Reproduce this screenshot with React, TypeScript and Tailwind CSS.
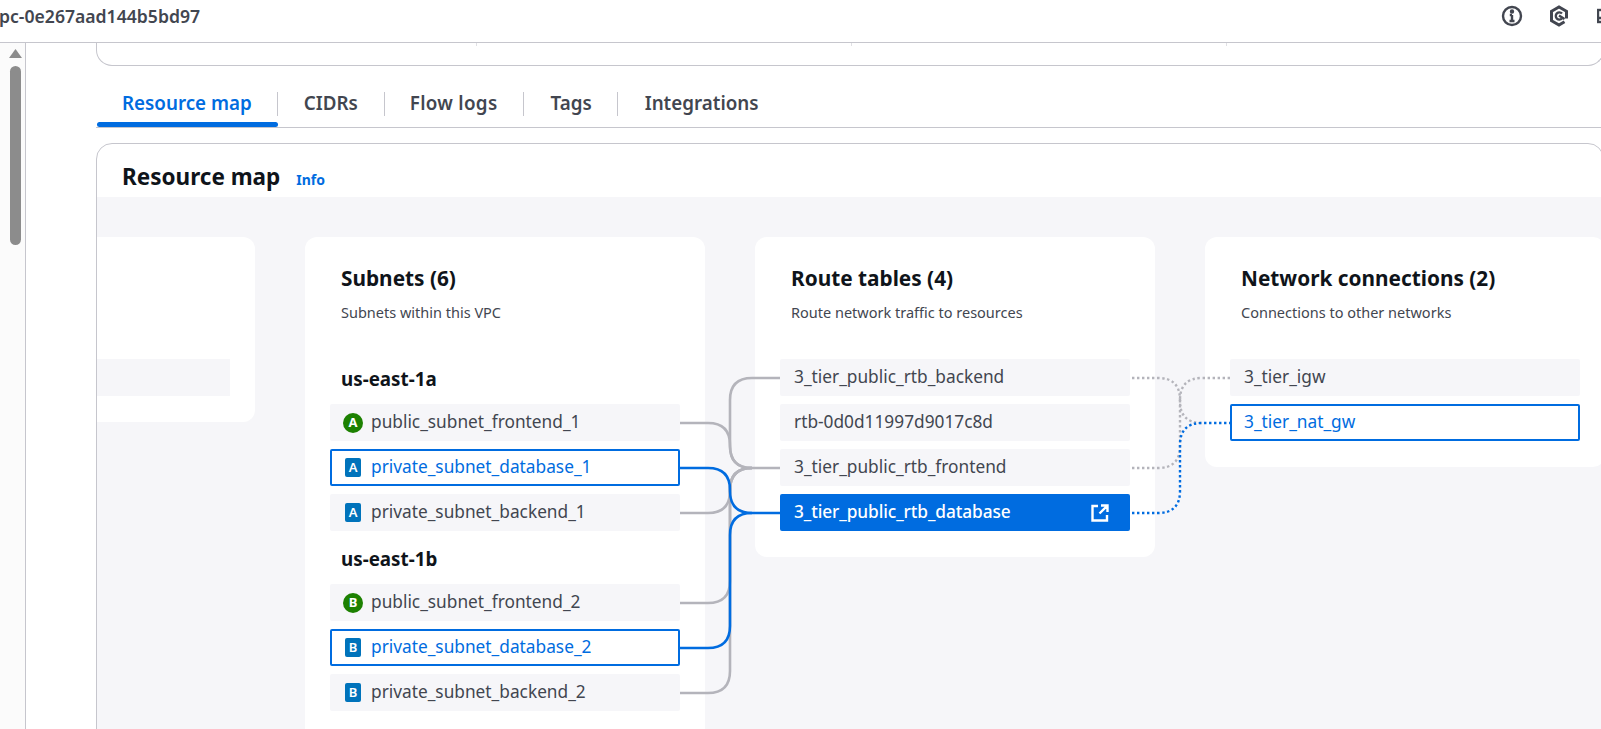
import React from 'react';

const font = 'font-["Noto_Sans",sans-serif]';

type Row = { name: string; badge?: string; kind?: 'public' | 'private'; state?: 'linked' | 'active' };

const zoneA: Row[] = [
  { name: 'public_subnet_frontend_1', badge: 'A', kind: 'public' },
  { name: 'private_subnet_database_1', badge: 'A', kind: 'private', state: 'linked' },
  { name: 'private_subnet_backend_1', badge: 'A', kind: 'private' },
];

const zoneB: Row[] = [
  { name: 'public_subnet_frontend_2', badge: 'B', kind: 'public' },
  { name: 'private_subnet_database_2', badge: 'B', kind: 'private', state: 'linked' },
  { name: 'private_subnet_backend_2', badge: 'B', kind: 'private' },
];

const routeTables: Row[] = [
  { name: '3_tier_public_rtb_backend' },
  { name: 'rtb-0d0d11997d9017c8d' },
  { name: '3_tier_public_rtb_frontend' },
  { name: '3_tier_public_rtb_database', state: 'active' },
];

const connections: Row[] = [{ name: '3_tier_igw' }, { name: '3_tier_nat_gw', state: 'linked' }];

const tabs = [
  { label: 'Resource map', cls: 'px-[25px] text-[#006ce0] border-r' },
  { label: 'CIDRs', cls: 'px-[26px] text-[#424650] border-r' },
  { label: 'Flow logs', cls: 'px-[25px] tracking-[0.3px] text-[#424650] border-r' },
  { label: 'Tags', cls: 'pl-[27px] pr-[25px] text-[#424650] border-r' },
  { label: 'Integrations', cls: 'pl-[27px] pr-[25px] text-[#424650]' },
];

function Badge({ label, kind }: { label: string; kind: 'public' | 'private' }) {
  if (kind === 'public') {
    return (
      <span className="flex h-[20px] w-[20px] shrink-0 items-center justify-center rounded-full bg-[#1d8102] text-[13px] font-bold leading-none text-white">
        {label}
      </span>
    );
  }
  return (
    <span className="mx-[2px] flex h-[19px] w-[16px] shrink-0 items-center justify-center rounded-[2px] bg-[#0073bb] text-[13px] font-semibold leading-none text-white">
      {label}
    </span>
  );
}

function MapRow({ row }: { row: Row }) {
  const tone =
    row.state === 'active'
      ? 'bg-[#006ce0] text-white font-medium tracking-[-0.1px]'
      : row.state === 'linked'
        ? 'bg-white border-2 border-[#006ce0] text-[#006ce0]'
        : 'bg-[#f6f6f9] text-[#424650]';
  return (
    <div className={`flex h-[37px] items-center rounded-[2px] text-[17.3px] leading-none ${tone} ${row.badge ? (row.state ? 'pl-[11px]' : 'pl-[13px]') : row.state === 'linked' ? 'pl-[12px]' : 'pl-[14px]'}`}>
      {row.badge && row.kind && (
        <span className="mr-[8px]">
          <Badge label={row.badge} kind={row.kind} />
        </span>
      )}
      <span className="-mt-[2px]">{row.name}</span>
      {row.state === 'active' && (
        <svg className="ml-auto mr-[21px]" width="18" height="18" viewBox="0 0 18 18" fill="none" stroke="currentColor" strokeWidth="2.4">
          <path d="M7 2H1.5v14.5H16V11" />
          <path d="M10 1.5h6.5V8M16 2L8.5 9.5" />
        </svg>
      )}
    </div>
  );
}

function PanelHead({ title, sub }: { title: string; sub: string }) {
  return (
    <>
      <h3 className="pl-[36px] text-[20.8px] font-bold leading-[28px] text-[#0f141a]">{title}</h3>
      <p className="mt-[10px] pl-[36px] text-[14.5px] leading-[20px] text-[#424650]">{sub}</p>
    </>
  );
}

function Connectors() {
  const gray = [
    'M680 423H708Q730 423 730 445V446Q730 468 752 468H780',
    'M780 378H752Q730 378 730 400V446Q730 468 752 468',
    'M680 513H708Q730 513 730 491V490Q730 468 752 468',
    'M680 603H708Q730 603 730 581V490Q730 468 752 468',
    'M680 693H708Q730 693 730 671V490Q730 468 752 468',
  ];
  const blue = ['M680 468H708Q730 468 730 490V491Q730 513 752 513H780', 'M680 648H708Q730 648 730 626V535Q730 513 752 513'];
  const dottedGray = [
    'M1132 378H1158Q1180 378 1180 400V401Q1180 423 1202 423',
    'M1230 378H1202Q1180 378 1180 400',
    'M1132 468H1158Q1180 468 1180 446V400',
  ];
  return (
    <svg className="pointer-events-none absolute left-0 top-0" width="1504" height="532" viewBox="97 197 1504 532" fill="none">
      {gray.map((d) => (
        <path key={d} d={d} stroke="#b4b4bb" strokeWidth="2.6" />
      ))}
      {blue.map((d) => (
        <path key={d} d={d} stroke="#006ce0" strokeWidth="2.6" />
      ))}
      {dottedGray.map((d) => (
        <path key={d} d={d} stroke="#b4b4bb" strokeWidth="2.4" strokeDasharray="2.4 2.6" />
      ))}
      <path d="M1132 513H1158Q1180 513 1180 491V445Q1180 423 1202 423H1230" stroke="#006ce0" strokeWidth="2.4" strokeDasharray="2.4 2.6" />
    </svg>
  );
}

export default function App() {
  return (
    <div className={`flex h-[729px] w-[1601px] flex-col overflow-hidden bg-white ${font}`}>
      {/* Top bar */}
      <header className="flex h-[43px] shrink-0 items-center border-b border-[#c6c6cd] pb-[10px]">
        <span className="-ml-[1px] text-[17.6px] font-semibold text-[#424650]">pc-0e267aad144b5bd97</span>
        <div className="ml-auto flex items-center text-[#424650]">
          <svg width="22" height="22" viewBox="0 0 22 22" fill="none" stroke="currentColor" strokeWidth="2.4">
            <circle cx="11" cy="11" r="9" />
            <path d="M11 10v6M8.5 16h5M8.8 10H11" />
            <circle cx="11" cy="6.5" r="1" fill="currentColor" />
          </svg>
          <svg className="ml-[26px]" width="20" height="22" viewBox="0 0 20 22" fill="none" stroke="currentColor" strokeWidth="3">
            <path d="M15.5 16.8L10 20l-7.5-4.3V6.3L10 2l7.5 4.3v7.2" />
            <path d="M13 8.5a3.6 3.6 0 1 0 0 5" strokeWidth="2.4" />
            <path d="M10 10.5l5.5 3.5" strokeWidth="2.4" />
          </svg>
          <svg className="ml-[28px] -mr-[10px]" width="14" height="16" viewBox="0 0 14 16" fill="none" stroke="currentColor" strokeWidth="2.4">
            <rect x="1" y="2" width="14" height="12" />
            <path d="M5 6h6M1 10h14" />
          </svg>
        </div>
      </header>

      <div className="flex min-h-0 flex-1">
        {/* Scroll strip */}
        <aside className="flex w-[26px] shrink-0 flex-col border-r border-[#c6c6cd] bg-[#fbfbfb] pl-[9px] pt-[6px]">
          <svg width="13" height="9" viewBox="0 0 13 9" fill="#8c8c8c">
            <path d="M6.5 0L13 9H0z" />
          </svg>
          <div className="ml-[1px] mt-[8px] h-[179px] w-[11px] rounded-full bg-[#8c8c8c]" />
        </aside>

        <main className="min-w-0 flex-1 overflow-hidden pl-[70px]">
          {/* Summary card, scrolled mostly out of view */}
          <div className="-mr-[3px] -mt-[10px] h-[33px] rounded-b-[16px] border border-t-0 border-[#c6c6cd]">
            <div className="grid h-[13px] grid-cols-[380px_375px_375px_1fr]">
              <div className="border-r border-[#e0e0e4]" />
              <div className="border-r border-[#e0e0e4]" />
              <div className="border-r border-[#e0e0e4]" />
              <div />
            </div>
          </div>

          {/* Tabs */}
          <nav className="flex h-[62px] items-end border-b border-[#c6c6cd] pl-[1px]">
            {tabs.map((tab, i) => (
              <div key={tab.label} className="relative flex h-[35px] items-start">
                <span className={`flex h-[24px] items-center border-[#c6c6cd] pb-[2px] text-[18.8px] font-semibold leading-none ${tab.cls}`}>
                  {tab.label}
                </span>
                {i === 0 && <span className="absolute bottom-0 left-0 right-0 h-[5px] rounded-full bg-[#006ce0]" />}
              </div>
            ))}
          </nav>

          {/* Resource map card */}
          <section className="-mr-[3px] mt-[15px] h-[600px] overflow-hidden rounded-t-[16px] border border-[#c6c6cd]">
            <div className="flex h-[53px] items-center pl-[25px] pt-[14px]">
              <h2 className="text-[22.5px] font-bold leading-none text-[#0f141a]">Resource map</h2>
              <span className="ml-[16px] mt-[5px] text-[14px] font-bold leading-none text-[#006ce0]">Info</span>
            </div>
            <div className="relative h-[540px] bg-[#f6f6f9] pt-[40px]">
              <div className="-ml-[242px] flex w-[1750px] items-start gap-[50px]">
                <div className="h-[185px] w-[400px] shrink-0 rounded-[12px] bg-white px-[25px] pt-[122px]">
                  <div className="h-[37px] bg-[#f6f6f9]" />
                </div>

                <div className="h-[520px] w-[400px] shrink-0 rounded-[12px] bg-white px-[25px] pt-[27px]">
                  <div className="-ml-[25px]">
                    <PanelHead title="Subnets (6)" sub="Subnets within this VPC" />
                  </div>
                  <h4 className="mt-[45px] pl-[11px] text-[18.8px] font-bold leading-[24px] text-[#0f141a]">us-east-1a</h4>
                  <div className="mt-[13px] flex flex-col gap-[8px]">
                    {zoneA.map((r) => (
                      <MapRow key={r.name} row={r} />
                    ))}
                  </div>
                  <h4 className="mt-[16px] pl-[11px] text-[18.8px] font-bold leading-[24px] text-[#0f141a]">us-east-1b</h4>
                  <div className="mt-[13px] flex flex-col gap-[8px]">
                    {zoneB.map((r) => (
                      <MapRow key={r.name} row={r} />
                    ))}
                  </div>
                </div>

                <div className="h-[320px] w-[400px] shrink-0 rounded-[12px] bg-white px-[25px] pt-[27px]">
                  <div className="-ml-[25px]">
                    <PanelHead title="Route tables (4)" sub="Route network traffic to resources" />
                  </div>
                  <div className="mt-[37px] flex flex-col gap-[8px]">
                    {routeTables.map((r) => (
                      <MapRow key={r.name} row={r} />
                    ))}
                  </div>
                </div>

                <div className="h-[230px] w-[400px] shrink-0 rounded-[12px] bg-white px-[25px] pt-[27px]">
                  <div className="-ml-[25px]">
                    <PanelHead title="Network connections (2)" sub="Connections to other networks" />
                  </div>
                  <div className="mt-[37px] flex flex-col gap-[8px]">
                    {connections.map((r) => (
                      <MapRow key={r.name} row={r} />
                    ))}
                  </div>
                </div>
              </div>
              <Connectors />
            </div>
          </section>
        </main>
      </div>
    </div>
  );
}
